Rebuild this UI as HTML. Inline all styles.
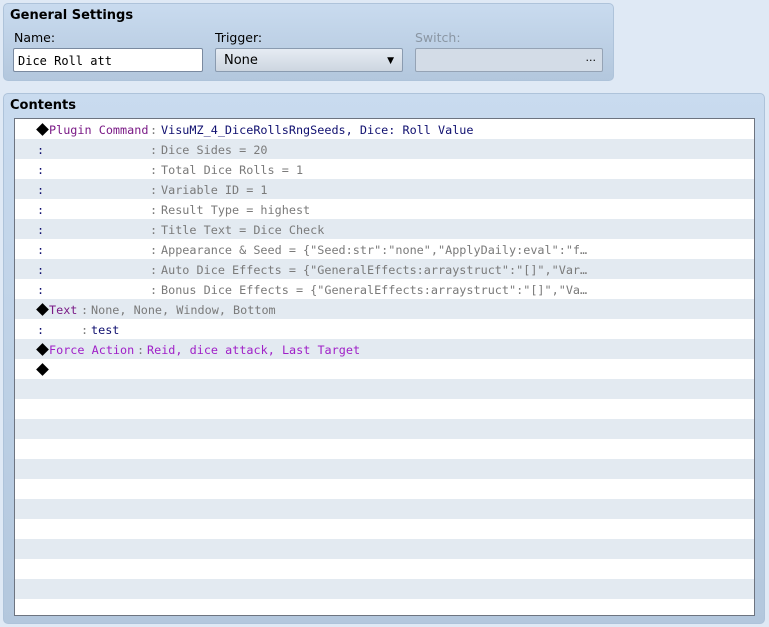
<!DOCTYPE html>
<html><head><style>
*{margin:0;padding:0;box-sizing:border-box}
body{width:769px;height:627px;background:#dfe9f5;position:relative;overflow:hidden;font-family:"DejaVu Sans","Liberation Sans",sans-serif}
.panel{position:absolute;border:1px solid #aec3da;border-radius:5px;background:linear-gradient(#c9dbef,#b3c7dd)}
.h{position:absolute;font-weight:bold;font-size:13px;color:#000}
.lbl{position:absolute;font-size:12.5px;color:#000;font-weight:500}
.box{position:absolute;height:24px;border:1px solid #8a9bb0;border-radius:2px}
.list{position:absolute;left:14px;top:118px;width:741px;height:498px;border:1px solid #6d7480;background:#fff;overflow:hidden}
.row{position:absolute;left:0;width:740px;height:20px;font-family:"DejaVu Sans Mono","Liberation Mono",monospace;font-size:11.8px;line-height:22px;white-space:pre}
.row span{position:absolute;top:0}
.row span.bk{left:23px!important;top:6px;width:9px;height:9px;background:#000;transform:rotate(45deg);font-size:0;color:transparent}
.g{background:#e3eaf1}
.pu{color:#7a1a86}.nv{color:#101070}.gr{color:#7a7a7a}.fa{color:#a020c8}
</style></head><body>
<div class="panel" style="left:3px;top:3px;width:611px;height:78px"></div>
<div class="h" style="left:10px;top:8px">General Settings</div>
<div class="lbl" style="left:14px;top:30px">Name:</div>
<div class="lbl" style="left:215px;top:30px">Trigger:</div>
<div class="lbl" style="left:415px;top:30px;color:#8a96a3">Switch:</div>
<div class="box" style="left:13px;top:48px;width:190px;background:#fff;border-color:#7a8aa0;font-family:'DejaVu Sans Mono',monospace;font-size:12px;line-height:24px;padding-left:4px">Dice Roll att</div>
<div class="box" style="left:215px;top:48px;width:188px;background:linear-gradient(#e6ecf3,#cdd6e0);font-size:13px;line-height:24px;padding-left:8px">None<span style="position:absolute;right:8px;top:0;font-size:9px">▼</span></div>
<div class="box" style="left:415px;top:48px;width:188px;background:#d3dce7;border-color:#95a3b5;font-size:11px;line-height:24px"><span style="position:absolute;right:6px;top:0">···</span></div>
<div class="panel" style="left:3px;top:93px;width:762px;height:531px"></div>
<div class="h" style="left:10px;top:98px">Contents</div>
<div class="list">
<div class="row" style="top:0"><span class="bk">◆</span><span class="pu" style="left:34px">Plugin Command</span><span class="gr" style="left:135px">:</span><span class="nv" style="left:146px">VisuMZ_4_DiceRollsRngSeeds, Dice: Roll Value</span></div>
<div class="row g" style="top:20px"><span class="nv" style="left:22px">:</span><span class="gr" style="left:135px">:</span><span class="gr" style="left:146px">Dice Sides = 20</span></div>
<div class="row" style="top:40px"><span class="nv" style="left:22px">:</span><span class="gr" style="left:135px">:</span><span class="gr" style="left:146px">Total Dice Rolls = 1</span></div>
<div class="row g" style="top:60px"><span class="nv" style="left:22px">:</span><span class="gr" style="left:135px">:</span><span class="gr" style="left:146px">Variable ID = 1</span></div>
<div class="row" style="top:80px"><span class="nv" style="left:22px">:</span><span class="gr" style="left:135px">:</span><span class="gr" style="left:146px">Result Type = highest</span></div>
<div class="row g" style="top:100px"><span class="nv" style="left:22px">:</span><span class="gr" style="left:135px">:</span><span class="gr" style="left:146px">Title Text = Dice Check</span></div>
<div class="row" style="top:120px"><span class="nv" style="left:22px">:</span><span class="gr" style="left:135px">:</span><span class="gr" style="left:146px">Appearance &amp; Seed = {"Seed:str":"none","ApplyDaily:eval":"f…</span></div>
<div class="row g" style="top:140px"><span class="nv" style="left:22px">:</span><span class="gr" style="left:135px">:</span><span class="gr" style="left:146px">Auto Dice Effects = {"GeneralEffects:arraystruct":"[]","Var…</span></div>
<div class="row" style="top:160px"><span class="nv" style="left:22px">:</span><span class="gr" style="left:135px">:</span><span class="gr" style="left:146px">Bonus Dice Effects = {"GeneralEffects:arraystruct":"[]","Va…</span></div>
<div class="row g" style="top:180px"><span class="bk">◆</span><span class="pu" style="left:34px">Text</span><span class="gr" style="left:66px">:</span><span class="gr" style="left:76px">None, None, Window, Bottom</span></div>
<div class="row" style="top:200px"><span class="nv" style="left:22px">:</span><span class="gr" style="left:66px">:</span><span class="nv" style="left:76px">test</span></div>
<div class="row g" style="top:220px"><span class="bk">◆</span><span class="fa" style="left:34px">Force Action</span><span class="gr" style="left:122px">:</span><span class="fa" style="left:132px">Reid, dice attack, Last Target</span></div>
<div class="row" style="top:240px"><span class="bk">◆</span></div>
<div class="row g" style="top:260px"></div><div class="row g" style="top:300px"></div><div class="row g" style="top:340px"></div><div class="row g" style="top:380px"></div><div class="row g" style="top:420px"></div><div class="row g" style="top:460px"></div>
</div>
</body></html>
